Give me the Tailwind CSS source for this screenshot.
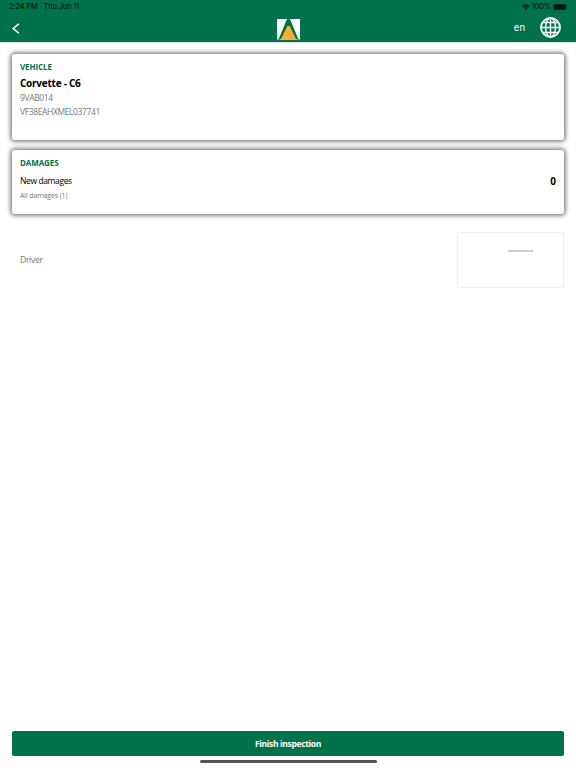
<!DOCTYPE html>
<html lang="en">
<head>
  <meta charset="UTF-8" />
  <meta name="viewport" content="width=device-width, initial-scale=1.0"/>
  <title>Vehicle inspection</title>
  <script src="https://cdn.jsdelivr.net/npm/@tailwindcss/browser@4"></script>
</head>
<body class="h-screen overflow-hidden flex flex-col bg-white font-['Open_Sans',sans-serif] text-black">
  <!-- Header -->
  <header class="h-[42px] shrink-0 bg-[#00724b] font-['Inter',sans-serif] shadow-[0_1px_1px_rgba(0,0,0,0.12)]">
    <div class="h-3.5 flex items-center justify-between pl-[9px] pr-2 text-[7.5px] leading-[14px] tracking-[-0.2px] text-black/80">
      <div class="flex gap-[6px] font-medium">
        <span>2:24 PM</span>
        <span>Thu Jun 11</span>
      </div>
      <div class="flex items-center gap-[2px]">
        <svg class="w-2 h-1.5" viewBox="0 0 16 12" fill="none" stroke="currentColor" stroke-width="2.4">
          <path d="M1 4.5a10 10 0 0 1 14 0M3.5 7.5a6.5 6.5 0 0 1 9 0"/>
          <path d="M8 12 5.5 9.5a3.5 3.5 0 0 1 5 0z" fill="currentColor" stroke="none"/>
        </svg>
        <span class="font-medium">100%</span>
        <svg class="w-[15px] h-1.5" viewBox="0 0 15 6">
          <rect x="0.3" y="0.3" width="12.8" height="5.4" rx="1.5" fill="currentColor"/>
          <path d="M13.8 2v2q.8-.3.8-1t-.8-1" fill="currentColor" opacity=".5"/>
        </svg>
      </div>
    </div>
    <div class="h-7 grid grid-cols-3 items-center pl-3 pr-[15px]">
      <svg class="w-2 h-[11px]" viewBox="0 0 8 11" fill="none" stroke="white" stroke-width="1.6">
        <path d="M6.8.8 1.2 5.5l5.6 4.7"/>
      </svg>
      <svg class="w-[23px] h-[21px] justify-self-center mt-[3px] ml-[4px]" viewBox="0 0 23 21">
        <path d="M0 0h10L1.5 20.500H0zM13 0h10v20.500h-1.500z" fill="white"/>
        <path d="M10.300 7h2.400L19 20H4z" fill="#f9ad34"/>
        <path d="M2.500 20h18v.600h-18z" fill="white"/>
      </svg>
      <div class="flex items-center justify-end gap-[15px]">
        <span class="text-[9.5px] text-white">en</span>
        <svg class="w-[21px] h-[21px] -mt-px" viewBox="0 0 21 21" fill="none" stroke="white" stroke-width="1.4">
          <circle cx="10.5" cy="10.5" r="9.5" stroke-width="1.8"/>
          <ellipse cx="10.5" cy="10.5" rx="4.9" ry="9.5"/>
          <path d="M10.5 1v19M1 10.5h19M2.800 5.500h15.400M2.800 15.500h15.400"/>
        </svg>
      </div>
    </div>
  </header>

  <main class="grow flex flex-col px-3 pt-3">
    <!-- Vehicle -->
    <section class="h-[86px] shrink-0 bg-white rounded-[3px] px-2 pt-[6px] shadow-[0_0_5px_1px_rgba(0,0,0,0.65)]">
      <h2 class="text-[8px] leading-[13px] tracking-[-0.1px] font-bold text-[#00724b]">VEHICLE</h2>
      <p class="mt-[2px] text-[10px] leading-4 tracking-[-0.25px] font-bold">Corvette - C6</p>
      <p class="text-[8.5px] leading-[14px] tracking-[-0.38px] text-[#777]">9VAB014</p>
      <p class="text-[8.5px] leading-[14px] tracking-[-0.38px] text-[#777]">VF38EAHXMEL037741</p>
    </section>

    <!-- Damages -->
    <section class="mt-[10px] h-[64px] shrink-0 bg-white rounded-[3px] px-2 pt-[6px] shadow-[0_0_5px_1px_rgba(0,0,0,0.65)]">
      <h2 class="text-[8px] leading-[13px] tracking-[-0.1px] font-bold text-[#00724b]">DAMAGES</h2>
      <div class="mt-1 flex items-center justify-between leading-4">
        <span class="text-[8.5px] tracking-[-0.38px]">New damages</span>
        <span class="text-[10px] font-bold">0</span>
      </div>
      <p class="text-[7px] leading-[13px] tracking-[-0.13px] text-[#777]">All damages (1)</p>
    </section>

    <!-- Driver signature -->
    <section class="mt-[18px] pl-2 flex items-center justify-between">
      <span class="text-[8.5px] tracking-[-0.28px] text-[#777]">Driver</span>
      <div class="w-[107px] h-[56px] border border-[#efefef] rounded-[2px] pt-[17px] pl-[50px]">
        <div class="w-[25px] h-[2px] bg-[#d0d0d0]"></div>
      </div>
    </section>

    <button class="mt-auto h-[25px] pt-px shrink-0 rounded-[2px] bg-[#00724b] text-[8.5px] tracking-[-0.34px] font-bold text-white">Finish inspection</button>
    <div class="mt-1 mb-[5px] h-[3px] w-[177px] shrink-0 self-center rounded-full bg-[#555]"></div>
  </main>
</body>
</html>
